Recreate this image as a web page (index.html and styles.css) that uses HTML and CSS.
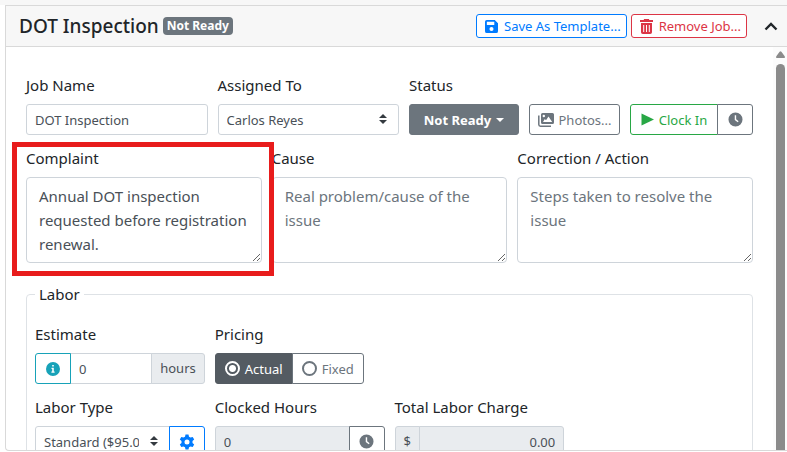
FILE: index.html
```html
<!DOCTYPE html>
<html lang="en">
<head>
<meta charset="utf-8">
<title>DOT Inspection</title>
<link rel="stylesheet" href="styles.css">
</head>
<body>
<svg class="defs" aria-hidden="true">
  <symbol id="clock" viewBox="0 0 16 16"><path fill="currentColor" fill-rule="evenodd" d="M8 .5a7.500 7.500 0 1 0 0 15 7.500 7.500 0 0 0 0-15zM7.200 3.500h1.500v4.300l2.600 2-.9 1.200-3.200-2.500z"/></symbol>
  <symbol id="sort" viewBox="0 0 8 10"><path fill="#343a40" d="M4 0l4 4H0zM0 6h8l-4 4z"/></symbol>
</svg>
<main class="card">
  <header class="card-header">
    <h1 class="title">DOT Inspection</h1>
    <span class="badge">Not Ready</span>
    <div class="actions">
      <button type="button" class="btn btn-compact blue">
        <svg width="13" height="13" viewBox="0 0 14 14"><path fill="currentColor" fill-rule="evenodd" d="M2 0h8.500L14 3.500V12a2 2 0 0 1-2 2H2a2 2 0 0 1-2-2V2a2 2 0 0 1 2-2zm0 2v3.500h8V2zm5 5.500a2.200 2.200 0 1 0 0 4.400 2.200 2.200 0 0 0 0-4.400z"/></svg>
        Save As Template...
      </button>
      <button type="button" class="btn btn-compact red">
        <svg width="13" height="15" viewBox="0 0 13 15"><path fill="currentColor" fill-rule="evenodd" d="M4.200 0h4.600l.6 1H13v2H0V1h3.600zM1 4h11v9.200A1.800 1.800 0 0 1 10.200 15H2.800A1.800 1.800 0 0 1 1 13.200zm2.200 2v7h1V6zm2.800 0v7h1V6zm2.800 0v7h1V6z"/></svg>
        Remove Job...
      </button>
      <button type="button" class="collapse" aria-label="Collapse">
        <svg width="14" height="9" viewBox="0 0 14 9"><path d="M1.500 7.500L7 2l5.500 5.500" fill="none" stroke="currentColor" stroke-width="2.400"/></svg>
      </button>
    </div>
  </header>
  <div class="card-body">
    <form class="content">
      <div class="row">
        <div class="field">
          <label for="job">Job Name</label>
          <input id="job" class="control" type="text" value="DOT Inspection">
        </div>
        <div class="field">
          <label for="assigned">Assigned To</label>
          <div class="select">
            <select id="assigned" class="control"><option>Carlos Reyes</option></select>
            <svg class="sort" width="8" height="10"><use href="#sort"/></svg>
          </div>
        </div>
        <div class="status">
          <label for="status">Status</label>
          <div class="status-buttons">
            <button id="status" type="button" class="btn solid">Not Ready
              <svg width="8" height="4" viewBox="0 0 8 4"><path fill="currentColor" d="M0 0h8L4 4z"/></svg>
            </button>
            <button type="button" class="btn gray photos">
              <svg width="16" height="14" viewBox="0 0 16 14"><path fill="currentColor" fill-rule="evenodd" d="M4.500 0h10A1.500 1.500 0 0 1 16 1.500v8a1.500 1.500 0 0 1-1.500 1.500h-10A1.500 1.500 0 0 1 3 9.500v-8A1.500 1.500 0 0 1 4.500 0zm1.300 1.800a1.200 1.200 0 1 0 0 2.400 1.200 1.200 0 0 0 0-2.400zM5 9h9.200L10.500 3.500 8 7.200 6.800 5.900z"/><path fill="none" stroke="currentColor" stroke-width="1.500" d="M.8 2.500v9q0 1.700 1.700 1.700H13"/></svg>
              Photos...
            </button>
            <div class="group clock-in">
              <button type="button" class="btn green grow">
                <svg width="13" height="13" viewBox="0 0 13 13"><path fill="currentColor" d="M.5.500L13 6.500.5 12.500z"/></svg>
                Clock In
              </button>
              <button type="button" class="btn gray icon" aria-label="Clock history"><svg width="15" height="15"><use href="#clock"/></svg></button>
            </div>
          </div>
        </div>
      </div>
      <div class="row">
        <div class="field marked">
          <label for="complaint">Complaint</label>
          <textarea id="complaint" rows="3">Annual DOT inspection requested before registration renewal.</textarea>
        </div>
        <div class="field">
          <label for="cause">Cause</label>
          <textarea id="cause" rows="3" placeholder="Real problem/cause of the issue"></textarea>
        </div>
        <div class="field">
          <label for="correction">Correction / Action</label>
          <textarea id="correction" rows="3" placeholder="Steps taken to resolve the issue"></textarea>
        </div>
      </div>
      <fieldset>
        <legend>Labor</legend>
        <div class="labor">
          <div class="field">
            <label for="estimate">Estimate</label>
            <div class="group">
              <button type="button" class="btn teal icon" aria-label="Estimate information">
                <svg width="14" height="14" viewBox="0 0 14 14"><path fill="currentColor" fill-rule="evenodd" d="M7 0a7 7 0 1 0 0 14A7 7 0 0 0 7 0zM6.200 3h1.600v1.600H6.200zM5.500 5.700h2.300v3.800h.8v1.200H5.400V9.500h.8V6.900h-.7z"/></svg>
              </button>
              <input id="estimate" class="control" type="text" value="0">
              <span class="addon">hours</span>
            </div>
          </div>
          <div class="field" role="radiogroup" aria-labelledby="pricing">
            <span id="pricing" class="label">Pricing</span>
            <div class="group">
              <label class="btn pick picked"><input type="radio" name="pricing" checked>Actual</label>
              <label class="btn pick"><input type="radio" name="pricing">Fixed</label>
            </div>
          </div>
          <div class="field first">
            <label for="type">Labor Type</label>
            <div class="group">
              <div class="select narrow">
                <select id="type" class="control"><option>Standard ($95.00/hr)</option></select>
                <svg class="sort" width="8" height="10"><use href="#sort"/></svg>
              </div>
              <button type="button" class="btn blue icon" aria-label="Labor type settings">
                <svg width="16" height="16" viewBox="0 0 16 16"><path fill="currentColor" fill-rule="evenodd" d="M6.500.5h3l.5 2.200 1.500.9 2.200-.7 1.500 2.600-1.700 1.600v1.800l1.700 1.600-1.500 2.600-2.200-.7-1.500.9-.5 2.200h-3L6 13.300l-1.500-.9-2.200.7L.8 10.500l1.700-1.600V7.100L.8 5.500l1.500-2.600 2.200.7L6 2.700zM8 5.500a2.500 2.500 0 1 0 0 5 2.500 2.500 0 0 0 0-5z"/></svg>
              </button>
            </div>
          </div>
          <div class="field">
            <label for="clocked">Clocked Hours</label>
            <div class="group">
              <input id="clocked" class="control" type="text" value="0" readonly>
              <button type="button" class="btn gray icon" aria-label="Clocked hours"><svg width="15" height="15"><use href="#clock"/></svg></button>
            </div>
          </div>
          <div class="field">
            <label for="total">Total Labor Charge</label>
            <div class="group">
              <span class="addon">$</span>
              <input id="total" class="control amount" type="text" value="0.00" readonly>
            </div>
          </div>
        </div>
      </fieldset>
    </form>
    <div class="scrollbar" aria-hidden="true">
      <svg width="9" height="7" viewBox="0 0 9 7"><path fill="#8b8b8b" d="M3.600.8q.9-1.200 1.800 0L8.700 5.200Q9.300 7 8 7H1Q-.3 7 .3 5.200z"/></svg>
      <div class="thumb"></div>
    </div>
  </div>
</main>
</body>
</html>
```
FILE: styles.css
```css
* { box-sizing: border-box; }

body {
  margin: 0;
  height: 100vh;
  padding: 5px 0 1px 5px;
  background: linear-gradient(#f7f7f7 5px, #fff 5px);
  color: #212529;
  font: 15px/24px "Noto Sans", sans-serif;
  overflow: hidden;
}

button, input, select, textarea { font: inherit; margin: 0; }

.defs { position: absolute; width: 0; height: 0; }

.card {
  display: flex;
  flex-direction: column;
  height: 100%;
  border: 1px solid #d9d9d9;
  border-right: 0;
  border-bottom-left-radius: 4px;
  overflow: hidden;
}

.card-header {
  display: flex;
  align-items: center;
  flex: none;
  height: 41px;
  padding: 0 9px 0 13px;
  background: #f7f7f7;
  border-bottom: 1px solid #d9d9d9;
}

.title { margin: 0; font-size: 19px; font-weight: 500; }

.badge {
  margin-left: 4px;
  padding: 0 4px;
  border-radius: 4px;
  background: #6c757d;
  color: #fff;
  font-size: 12px;
  font-weight: 700;
  line-height: 18px;
}

.actions { display: flex; align-items: center; gap: 4px; margin-left: auto; }

.btn {
  display: flex;
  align-items: center;
  justify-content: center;
  gap: 5px;
  height: 31px;
  padding: 0 8px;
  border: 1px solid currentColor;
  border-radius: 3px;
  background: #fff;
  font-size: 13px;
  line-height: 20px;
  white-space: nowrap;
}

.btn svg { flex: none; }
.btn-compact { height: 24px; padding: 0 5px 0 8px; gap: 6px; }
.blue { color: #007bff; }
.red { color: #dc3545; }
.gray { color: #6c757d; }
.green { color: #28a745; }
.teal { color: #17a2b8; }
.solid { width: 110px; background: #6c757d; border-color: #6c757d; color: #fff; font-weight: 700; }
.photos { width: 91px; }
.clock-in { width: 123px; }
.icon { flex: none; width: 36px; padding: 0; }
.grow { flex: 1; }

.collapse {
  display: flex;
  margin-left: 13px;
  padding: 0;
  border: 0;
  background: none;
  color: #212529;
}

.card-body { display: flex; flex: 1; min-height: 0; overflow: hidden; }
.content { flex: 1; min-width: 0; padding: 26px 20px; }

.row { display: flex; gap: 10px; margin-bottom: 11px; }
.field { flex: 1; min-width: 0; }
.status { flex: none; }
.status-buttons { display: flex; gap: 10px; }
.field > label, .status > label, .label { display: block; margin-bottom: 7px; }

.control {
  display: block;
  width: 100%;
  min-width: 0;
  height: 31px;
  padding: 0 8px;
  border: 1px solid #ced4da;
  border-radius: 3px;
  background: #fff;
  color: #495057;
  font-size: 13px;
}

.control:read-only:not(select) { background: #e9ecef; }
.amount { text-align: right; }

.select { position: relative; flex: 1; min-width: 0; }
.select select { appearance: none; padding-right: 28px; }
.sort { position: absolute; right: 12px; top: 10px; pointer-events: none; }

textarea {
  display: block;
  width: 100%;
  height: 86px;
  padding: 6px 12px;
  border: 1px solid #ced4da;
  border-radius: 4px;
  color: #495057;
  overflow: hidden;
  resize: vertical;
}

textarea::placeholder { color: #6c757d; }

.marked { position: relative; }
.marked::after {
  content: "";
  position: absolute;
  inset: -4px -12px -13px -14px;
  border: 5px solid #e81c1c;
  pointer-events: none;
  z-index: 1;
}

fieldset {
  min-width: 0;
  margin: 19px 0 0;
  padding: 16px 8px;
  border: 1px solid #dee2e6;
  border-radius: 4px;
}

legend { padding: 0 4px; }

.labor { display: grid; grid-template-columns: repeat(4, minmax(0, 1fr)); gap: 11px 10px; }
.first { grid-column: 1; }

.group { display: flex; }
.group > :not(:first-child), .group > .select:not(:first-child) .control { border-top-left-radius: 0; border-bottom-left-radius: 0; }
.group > :not(:last-child), .group > .select:not(:last-child) .control { border-top-right-radius: 0; border-bottom-right-radius: 0; }
.group > :not(:first-child) { margin-left: -1px; }
.group > .btn { position: relative; }
.narrow select { padding-right: 30px; text-overflow: clip; }

.addon {
  flex: none;
  height: 31px;
  padding: 0 8px;
  border: 1px solid #ced4da;
  border-radius: 3px;
  background: #e9ecef;
  color: #495057;
  font-size: 13px;
  line-height: 29px;
}

.pick { border-color: #6c757d; color: #6c757d; padding: 0 9px; }
.picked { background: #545b62; border-color: #545b62; color: #fff; }
.pick input {
  appearance: none;
  width: 15px;
  height: 15px;
  border: 2px solid currentColor;
  border-radius: 50%;
  color: inherit;
}
.picked input { background: radial-gradient(circle, currentColor 3px, transparent 4px); }

.scrollbar {
  display: flex;
  flex-direction: column;
  align-items: center;
  flex: none;
  gap: 6px;
  width: 14px;
  padding-top: 4px;
  background: #fcfcfc;
}

.scrollbar svg { flex: none; }
.thumb { flex: 1; width: 9px; border-radius: 5px 5px 0 0; background: #8b8b8b; }
```
